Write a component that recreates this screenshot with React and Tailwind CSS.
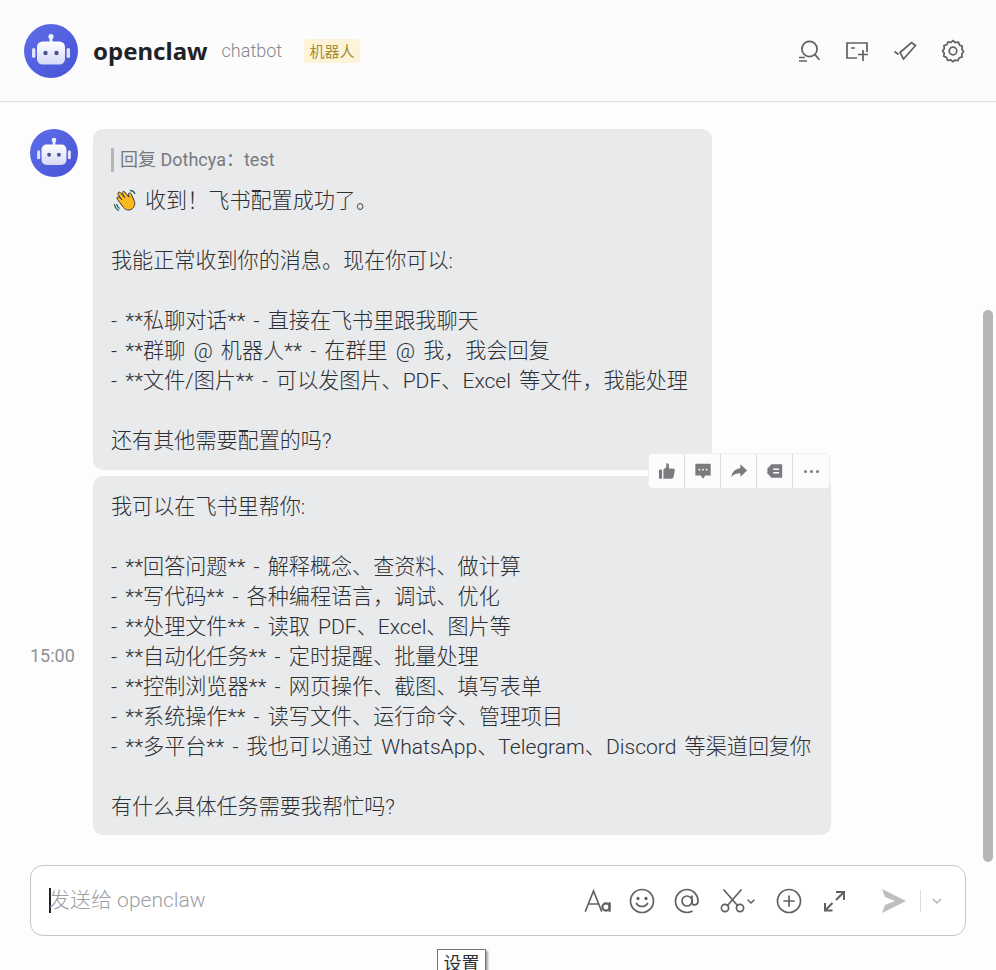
const firstLines = [
  '',
  '我能正常收到你的消息。现在你可以:',
  '',
  '- **私聊对话** - 直接在飞书里跟我聊天',
  '- **群聊 @ 机器人** - 在群里 @ 我，我会回复',
  '- **文件/图片** - 可以发图片、PDF、Excel 等文件，我能处理',
  '',
  '还有其他需要配置的吗?',
]

const secondLines = [
  '我可以在飞书里帮你:',
  '',
  '- **回答问题** - 解释概念、查资料、做计算',
  '- **写代码** - 各种编程语言，调试、优化',
  '- **处理文件** - 读取 PDF、Excel、图片等',
  '- **自动化任务** - 定时提醒、批量处理',
  '- **控制浏览器** - 网页操作、截图、填写表单',
  '- **系统操作** - 读写文件、运行命令、管理项目',
  '- **多平台** - 我也可以通过 WhatsApp、Telegram、Discord 等渠道回复你',
  '',
  '有什么具体任务需要我帮忙吗?',
]

function Lines({ items }) {
  return items.map((line, i) => (
    <div key={i} className="h-[30px] leading-[30px] whitespace-nowrap">
      {line}
    </div>
  ))
}

function RobotAvatar({ className }) {
  return (
    <svg viewBox="0 0 54 54" className={className}>
      <defs>
        <linearGradient id="avatarBg" x1="0" y1="0" x2="1" y2="1">
          <stop offset="0" stopColor="#5f6ee8" />
          <stop offset="1" stopColor="#4653d6" />
        </linearGradient>
        <linearGradient id="robotHead" x1="0" y1="0" x2="0" y2="1">
          <stop offset="0" stopColor="#ffffff" />
          <stop offset="1" stopColor="#d5d9f8" />
        </linearGradient>
      </defs>
      <circle cx="27" cy="27" r="27" fill="url(#avatarBg)" />
      <rect x="25.5" y="13" width="3" height="6" fill="#eef0fd" />
      <circle cx="27" cy="12.5" r="2.6" fill="#eef0fd" />
      <rect x="13" y="17.5" width="28" height="23" rx="5.5" fill="url(#robotHead)" />
      <rect x="8" y="24" width="3.4" height="10" rx="1.7" fill="#dfe2fa" />
      <rect x="42.6" y="24" width="3.4" height="10" rx="1.7" fill="#dfe2fa" />
      <circle cx="21.5" cy="29" r="2.2" fill="#4a5590" />
      <circle cx="32.5" cy="29" r="2.2" fill="#4a5590" />
    </svg>
  )
}

function WaveHand() {
  return (
    <svg viewBox="0 0 24 24" className="w-6 h-6 mr-2 ml-[2px] shrink-0">
      <path
        d="M4.500 10.500l6 8c2.200 2.800 6 3.400 8.700 1.200 2.700-2.200 3.300-5.500 1.800-8.500l-3-6.500c-.7-1.500-3-.8-2.600 1l.5 2.500L11.800 3c-1.100-1.300-3.200-.1-2.300 1.600l2.300 4-4.400-5c-1.300-1.300-3.300.2-2.300 1.800l3.600 5.200-2.400-2.400c-1.300-1.200-3.100.3-2 1.800z"
        fill="#fbb81f"
        stroke="#3a3a30"
        strokeWidth="1"
        strokeLinejoin="round"
      />
      <path d="M1.500 15.500c.4 2.500 1.600 4.600 4 6M3.800 15.500c.3 1.500 1 2.800 2.400 3.800M17.500 1.500c1.900.2 3.500 1.300 4.300 3.100" stroke="#2f6b5a" strokeWidth="1.300" fill="none" strokeLinecap="round" />
    </svg>
  )
}

function Header() {
  const stroke = { fill: 'none', stroke: '#5f6165', strokeWidth: 1.7 }
  return (
    <header className="h-[102px] shrink-0 flex items-center pl-6 pr-[31px] pt-[1px] border-b border-[#dfdfe1] bg-[#fcfcfc]">
      <RobotAvatar className="w-[54px] h-[54px] shrink-0" />
      <h1 className="ml-[15px] text-[24px] font-bold text-[#1f2329] leading-none">openclaw</h1>
      <span className="ml-[14px] text-[18px] font-[Roboto] font-light text-[#85878b] leading-none">chatbot</span>
      <span className="ml-[22px] h-6 w-14 flex items-center justify-center bg-[#fdf4d8] text-[15px] text-[#a48b3c] rounded-[3px]">机器人</span>
      <div className="ml-auto flex items-center gap-6">
        <svg viewBox="0 0 24 24" className="w-6 h-6" {...stroke}>
          <circle cx="12.5" cy="10" r="7.6" />
          <path d="M18 15.6l4.4 5.2M2 18.5h6M2 22h8" />
        </svg>
        <svg viewBox="0 0 24 24" className="w-6 h-6" {...stroke}>
          <path d="M12 19H2V4h20v9" />
          <path d="M6 9h4M13 15.500h10M18 11v11" />
        </svg>
        <svg viewBox="0 0 24 24" className="w-6 h-6" {...stroke}>
          <path d="M1.500 12.500l4 3M7 13.500L18.500 3.500l4 3L10.500 20 7 13.500z" />
        </svg>
        <svg viewBox="0 0 24 24" className="w-6 h-6" {...stroke}>
          <path d="M12 1.600l2.400 1.900 3-.3 1.200 2.800 2.700 1.300-.4 3 1.600 2.200-1.700 2.500.3 2.900-2.900 1-1.300 2.600-3-.4-1.900 1.500-2.400-1.600-3 .3-1.100-2.800-2.700-1.200.4-3L1.600 12l1.700-2.400-.3-3 2.900-1 1.200-2.700 3 .4z" />
          <circle cx="12" cy="12" r="3.800" />
        </svg>
      </div>
    </header>
  )
}

function MessageActions() {
  return (
    <div className="absolute left-[555px] -top-[23px] h-9 flex bg-[#fcfcfd] border border-[#eeeeef] rounded-[5px] divide-x divide-[#dcdcde]">
      <div className="w-9 flex items-center justify-center">
        <svg viewBox="0 0 20 20" className="w-[18px] h-[18px]" fill="#7a7b7e">
          <rect x="1" y="8.500" width="3.500" height="10" />
          <path d="M6 8.500l3.200-3V1.500c1.800-.5 3 .5 3 2.400v3.400h4.600c1.300 0 2.200 1 1.900 2.200l-1.400 7c-.2 1.200-1 2-2.200 2H6z" />
        </svg>
      </div>
      <div className="w-9 flex items-center justify-center">
        <svg viewBox="0 0 20 20" className="w-[18px] h-[18px]">
          <path d="M1.500 2h17v13h-6l-2.500 3.500L7.500 15h-6z" fill="#7a7b7e" />
          <circle cx="6" cy="8.500" r="1" fill="#fff" />
          <circle cx="10" cy="8.500" r="1" fill="#fff" />
          <circle cx="14" cy="8.500" r="1" fill="#fff" />
        </svg>
      </div>
      <div className="w-9 flex items-center justify-center">
        <svg viewBox="0 0 20 20" className="w-[18px] h-[18px]" fill="#7a7b7e">
          <path d="M11.500 2.500L19 9.500l-7.500 7v-4c-4 0-7.500 1-10 4.500.5-5.500 4-9.500 10-10z" />
        </svg>
      </div>
      <div className="w-9 flex items-center justify-center">
        <svg viewBox="0 0 20 20" className="w-[18px] h-[18px]">
          <path d="M6 2.500h12v15H6L1.500 12.500v-5z" fill="#7a7b7e" />
          <path d="M8 8h6.500M8 12h6.500" stroke="#fff" strokeWidth="1.600" />
        </svg>
      </div>
      <div className="flex-1 w-9 flex items-center justify-center gap-[3px]">
        <span className="w-[3px] h-[3px] rounded-full bg-[#7a7b7e]" />
        <span className="w-[3px] h-[3px] rounded-full bg-[#7a7b7e]" />
        <span className="w-[3px] h-[3px] rounded-full bg-[#7a7b7e]" />
      </div>
    </div>
  )
}

function Messages() {
  return (
    <main
      className="relative flex-1 min-h-0 pt-[27px] text-[21.1px] [word-spacing:3px] text-[#2c2f33] font-light"
      style={{ fontFamily: 'Roboto, "Noto Sans CJK SC", sans-serif' }}
    >
      <div className="flex">
        <div className="w-[93px] shrink-0 pl-[30px]">
          <RobotAvatar className="w-12 h-12" />
        </div>
        <div className="w-[619px] bg-[#e9eaec] rounded-[10px] pl-[18px] pr-4 pt-[19px] pb-[14px]">
          <div className="flex items-center h-6 mb-[14px] border-l-[3px] border-[#b4b5b8] pl-[6px] text-[18px] [word-spacing:0px] font-normal text-[#77797d] leading-none">
            回复 Dothcya：test
          </div>
          <div className="h-[30px] leading-[30px] flex items-center">
            <WaveHand />
            收到！飞书配置成功了。
          </div>
          <Lines items={firstLines} />
        </div>
      </div>
      <div className="flex items-center mt-[6px]">
        <div className="w-[93px] shrink-0 pl-[30px] text-[18px] text-[#8f9196] font-normal">15:00</div>
        <div className="relative w-[738px] bg-[#e9eaec] rounded-[10px] pl-[18px] pr-4 pt-4 pb-[13px]">
          <MessageActions />
          <Lines items={secondLines} />
        </div>
      </div>
      {/* overlay scrollbar */}
      <div className="absolute right-[3px] top-[208px] w-[10px] h-[552px] rounded-full bg-[#b5b6b8]" />
    </main>
  )
}

function Composer() {
  const stroke = { fill: 'none', stroke: '#5f6165', strokeWidth: 1.7, strokeLinecap: 'round' }
  return (
    <div className="relative h-[105px] shrink-0 pl-[30px] pr-[30px]">
      <div className="h-[71px] flex items-center bg-white border border-[#c6c6c8] rounded-[13px] pl-[18px] pr-[22px]">
        <div className="w-[2px] h-[25px] bg-[#1f2329]" />
        <span
          className="-ml-[2px] text-[21px] text-[#9c9ea2] font-light whitespace-nowrap"
          style={{ fontFamily: 'Roboto, "Noto Sans CJK SC", sans-serif' }}
        >
          发送给 openclaw
        </span>
        <div className="ml-auto flex items-center">
          <svg viewBox="0 0 28 26" className="w-7 h-[26px]" {...stroke}>
            <path d="M1.500 23L9.500 3l8 20M4.500 16h10" />
            <circle cx="22" cy="19" r="3.600" strokeWidth="2.200" />
            <path d="M25.600 15v8" strokeWidth="2.200" />
          </svg>
          <svg viewBox="0 0 26 26" className="ml-[17px] w-[26px] h-[26px]" {...stroke}>
            <circle cx="13" cy="13" r="11.500" />
            <circle cx="9" cy="10.500" r=".8" fill="#5f6165" />
            <circle cx="17" cy="10.500" r=".8" fill="#5f6165" />
            <path d="M7.500 15.500c2.500 4 8.500 4 11 0" />
          </svg>
          <svg viewBox="0 0 26 26" className="ml-[19px] w-[26px] h-[26px]" {...stroke}>
            <circle cx="13" cy="13" r="5" />
            <path d="M18 8v6.500c0 3.500 6 3.500 6-1.500C24 6.500 19 1.500 13 1.500S1.500 6.500 1.500 13 6.500 24.500 13 24.500c2 0 3.500-.4 5-1.200" />
          </svg>
          <svg viewBox="0 0 38 26" className="ml-5 w-[38px] h-[26px]" {...stroke}>
            <circle cx="5" cy="20" r="3.600" />
            <circle cx="20" cy="20" r="3.600" />
            <path d="M7.500 17.500L21 2M17.500 17.500L4 2" />
            <path d="M28 12l3 3 3-3" strokeWidth="1.500" />
          </svg>
          <svg viewBox="0 0 26 26" className="ml-[18px] w-[26px] h-[26px]" {...stroke}>
            <circle cx="13" cy="13" r="11.500" />
            <path d="M8 13h10M13 8v10" />
          </svg>
          <svg viewBox="0 0 24 24" className="ml-5 w-6 h-6" {...stroke}>
            <path d="M14 3h8v8M22 3l-8 8M3 14v7.500h7.500M3 21.500l7.500-7.500" strokeWidth="2" strokeLinecap="butt" />
          </svg>
          <svg viewBox="0 0 26 26" className="ml-[35px] w-[26px] h-[26px]" fill="#bdbec0">
            <path d="M1 1l24 12L1 25l3-8 10-4-10-4z" />
          </svg>
          <div className="ml-[13px] w-px h-[22px] bg-[#dcdcde]" />
          <svg viewBox="0 0 12 12" className="ml-[10px] w-3 h-3" fill="none" stroke="#b5b6b8" strokeWidth="1.500">
            <path d="M2 4l4 4 4-4" />
          </svg>
        </div>
      </div>
      {/* native tooltip cut off by the window */}
      <div className="absolute left-[437px] top-[84px] w-[49px] h-[30px] bg-white border border-[#767676] shadow-[2px_2px_2px_rgba(0,0,0,0.35)] text-[18px] text-[#2c2f33] text-center leading-[26px]">
        设置
      </div>
    </div>
  )
}

export default function App() {
  return (
    <div
      className="h-[970px] flex flex-col overflow-hidden bg-[#fdfdfe]"
      style={{ fontFamily: '"Noto Sans", "Noto Sans CJK SC", sans-serif' }}
    >
      <Header />
      <Messages />
      <Composer />
    </div>
  )
}
